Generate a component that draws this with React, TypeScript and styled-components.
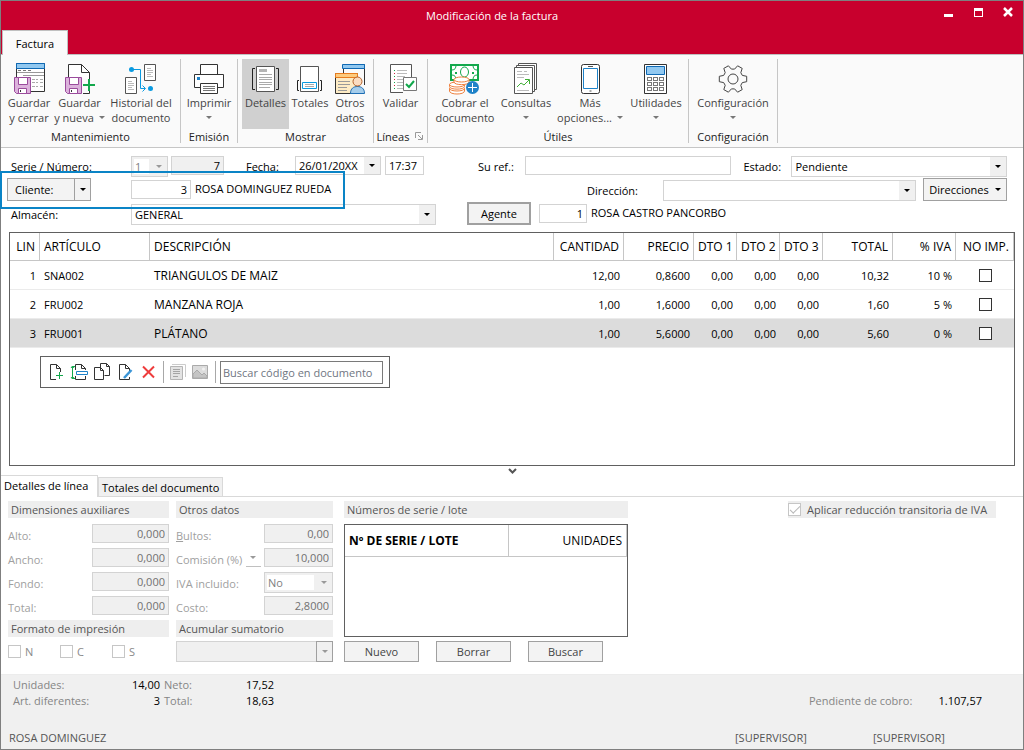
import React from "react";
import styled, { createGlobalStyle } from "styled-components";

const Global = createGlobalStyle`
  * { box-sizing: border-box; }
  body { margin: 0; background: #fff; }
  body, button, input, select { font-family: "Open Sans", "Noto Sans", sans-serif; font-size: 11px; }
  button, input, select { margin: 0; padding: 0; color: inherit; border-radius: 0; }
`;

/* ---------- window ---------- */
const Window = styled.div`
  position: relative;
  display: flex;
  flex-direction: column;
  min-height: 100vh;
  border: 1px solid #7f7f7f;
  line-height: 15px;
  color: #000;
  background: #fff;
`;
const TitleBar = styled.header`
  display: grid;
  grid-template-columns: 100px 1fr 100px;
  height: 54px;
  background: #c8002d;
  color: #fff;
  border-bottom: 1px solid #c0c0c0;
`;
const Title = styled.h1`
  margin: 0;
  padding: 7px 40px 0 0;
  text-align: center;
  font-size: 11px;
  font-weight: 400;
  line-height: 15px;
`;
const FileTab = styled.button`
  align-self: end;
  justify-self: start;
  margin: 0 0 -1px 1px;
  width: 66px;
  height: 25px;
  border: 1px solid #c0c0c0;
  border-bottom: 0;
  background: #fafafa;
  color: #000;
`;
const WindowButtons = styled.div`
  display: flex;
  justify-content: flex-end;
  gap: 14px;
  padding: 4px 7px 0 0;
`;
const WindowButton = styled.button`
  width: 16px;
  height: 16px;
  border: 0;
  background: none;
  svg { display: block; }
`;

/* ---------- ribbon ---------- */
const Ribbon = styled.nav`
  display: flex;
  height: 93px;
  padding: 4px 0;
  background: #fafafa;
  border-bottom: 1px solid #c6c6c6;
`;
const Group = styled.section<{ $pad?: number }>`
  display: flex;
  flex-direction: column;
  padding: 0 ${(p) => p.$pad ?? 0}px;
  border-right: 1px solid #c6c6c6;
`;
const GroupButtons = styled.div`
  display: flex;
  height: 73px;
`;
const GroupLabel = styled.div`
  display: flex;
  justify-content: center;
  align-items: center;
  gap: 6px;
  height: 15px;
  color: #222;
`;
const BigButton = styled.button<{ $w: number; $on?: boolean }>`
  display: flex;
  flex-direction: column;
  align-items: center;
  width: ${(p) => p.$w}px;
  height: 70px;
  padding-top: 3px;
  border: 0;
  background: ${(p) => (p.$on ? "#d0d0d0" : "none")};
  color: #444;
  line-height: 15px;
  white-space: nowrap;
  svg { flex: none; }
`;
const BigIcon = styled.svg`
  width: 32px;
  height: 33px;
  fill: none;
`;
const SecondLine = styled.span`
  display: flex;
  align-items: center;
  gap: 5px;
  min-height: 15px;
`;
const Caret = styled.i<{ $c?: string }>`
  width: 0;
  height: 0;
  flex: none;
  border: 3px solid transparent;
  border-top-color: ${(p) => p.$c ?? "#000"};
  border-bottom: 0;
`;
const Launcher = styled.button`
  width: 9px;
  height: 9px;
  border: 0;
  background: none;
  svg { display: block; }
`;

/* ---------- fields ---------- */
const Input = styled.input<{ $w?: number; $right?: boolean }>`
  width: ${(p) => (p.$w ? p.$w + "px" : "100%")};
  height: 19px;
  flex: none;
  padding: 0 3px 1px;
  border: 1px solid #d3d3d3;
  background: #fff;
  text-align: ${(p) => (p.$right ? "right" : "left")};
  &:disabled { background: #f0f0f0; }
`;
const Combo = styled.span<{ $w?: number; $short?: boolean; $off?: boolean; $edge?: boolean }>`
  display: flex;
  ${(p) => (p.$w ? `width: ${p.$w}px; flex: none;` : "flex: 1; min-width: 0;")}
  height: ${(p) => (p.$short ? 19 : 21)}px;
  margin-bottom: ${(p) => (p.$short ? 2 : 0)}px;
  border: 1px solid #d3d3d3;
  background: #f0f0f0;
  select, input {
    flex: 1;
    min-width: 0;
    appearance: none;
    border: 0;
    padding: 0 3px;
    opacity: 1;
    margin: ${(p) => (p.$off ? "2px" : "0")};
    padding-left: ${(p) => (p.$off ? "1px" : "3px")};
    background: ${(p) => (p.$edge ? "transparent" : "#fff")};
    color: ${(p) => (p.$off ? "#808080" : "inherit")};
  }
`;
const ComboArrow = styled.span<{ $edge?: boolean; $w?: number }>`
  display: flex;
  align-items: center;
  justify-content: center;
  width: ${(p) => p.$w ?? 16}px;
  margin: ${(p) => (p.$edge ? "-1px" : "0")};
  border: ${(p) => (p.$edge ? "1px solid #a0a0a0" : "0")};
`;
const PushButton = styled.button<{ $w: number; $h?: number; $strong?: boolean; $dim?: boolean }>`
  display: flex;
  align-items: center;
  justify-content: center;
  gap: 6px;
  flex: none;
  width: ${(p) => p.$w}px;
  height: ${(p) => p.$h ?? 23}px;
  border: ${(p) => (p.$strong ? 2 : 1)}px solid #a0a0a0;
  background: #f3f3f3;
  color: ${(p) => (p.$dim ? "#444" : "#000")};
`;

/* ---------- document header ---------- */
const DocForm = styled.form`
  position: relative;
  display: flex;
  flex-direction: column;
  gap: 1px;
  padding: 6px 16px 0 6px;
`;
const FormRow = styled.div`
  display: flex;
  align-items: flex-end;
  height: 23px;
  > ${Input} { margin-bottom: 2px; }
`;
const FormLabel = styled.label<{ $w: number; $pad?: number }>`
  flex: none;
  width: ${(p) => p.$w}px;
  padding: 0 0 3px ${(p) => p.$pad ?? 0}px;
  white-space: nowrap;
`;
const FieldText = styled.output<{ $w?: number }>`
  flex: none;
  width: ${(p) => (p.$w ? p.$w + "px" : "auto")};
  padding: 0 0 5px 4px;
  white-space: nowrap;
`;
const Space = styled.span<{ $w: number }>`
  flex: none;
  width: ${(p) => p.$w}px;
`;
const Grow = styled.span<{ $f: number }>`
  display: flex;
  flex: ${(p) => p.$f} 1 0;
  min-width: 0;
  align-items: flex-start;
  height: 21px;
`;
const SplitButton = styled.div`
  display: flex;
  flex: none;
  width: 84px;
  height: 23px;
  margin-right: 40px;
  button {
    display: flex;
    align-items: center;
    justify-content: center;
    border: 1px solid #a0a0a0;
    background: #f3f3f3;
  }
  button:first-child { flex: 1; justify-content: flex-start; padding-left: 7px; border-right: 0; }
  button:last-child { width: 17px; }
`;
const Highlight = styled.div`
  position: absolute;
  left: -1px;
  top: 23px;
  width: 345px;
  height: 38px;
  border: 2px solid #0a84c6;
  pointer-events: none;
`;

/* ---------- lines table ---------- */
const LinesPanel = styled.section`
  flex: 1;
  min-height: 234px;
  margin: 7px 8px 0;
  border: 1px solid #606060;
`;
const LinesTable = styled.table`
  width: 100%;
  table-layout: fixed;
  border-collapse: separate;
  border-spacing: 0;
  font-size: 12px;
`;
const Th = styled.th<{ $l?: boolean }>`
  height: 28px;
  padding: 0 4px;
  border-right: 1px solid #c6c6c6;
  border-bottom: 1px solid #c6c6c6;
  font-weight: 400;
  text-align: ${(p) => (p.$l ? "left" : "right")};
  white-space: nowrap;
`;
const LineRow = styled.tr<{ $sel?: boolean }>`
  background: ${(p) => (p.$sel ? "#dcdcdc" : "#fff")};
`;
const Td = styled.td<{ $l?: boolean; $c?: boolean; $big?: boolean }>`
  height: 29px;
  padding: 0 4px;
  border-bottom: 1px solid #ebebeb;
  font-size: ${(p) => (p.$big ? 12 : 11)}px;
  text-align: ${(p) => (p.$l ? "left" : p.$c ? "center" : "right")};
  white-space: nowrap;
`;
const Check = styled.input<{ $c?: string }>`
  position: relative;
  appearance: none;
  display: block;
  flex: none;
  width: 13px;
  height: 13px;
  border: 1px solid ${(p) => p.$c ?? "#333"};
  background: #fff;
  &:checked::after {
    content: "";
    position: absolute;
    left: 1px;
    top: 2px;
    width: 9px;
    height: 4px;
    border: solid #b8b8b8;
    border-width: 0 0 1px 1px;
    transform: rotate(-45deg);
  }
`;
const CheckCell = styled.span`
  display: flex;
  justify-content: center;
`;
const LineTools = styled.div`
  display: flex;
  align-items: center;
  gap: 4px;
  width: 350px;
  height: 32px;
  margin: 8px 0 0 30px;
  padding: 0 6px;
  border: 1px solid #606060;
`;
const ToolButton = styled.button`
  width: 19px;
  height: 20px;
  border: 0;
  background: none;
  svg { display: block; fill: none; }
`;
const ToolSep = styled.span`
  width: 1px;
  height: 22px;
  margin-left: 1px;
  background: #a8a8a8;
`;
const Search = styled.input`
  flex: 1;
  min-width: 0;
  height: 23px;
  padding: 0 2px;
  border: 1px solid #7a7a7a;
  &::placeholder { color: #6f7682; opacity: 1; }
`;
const Splitter = styled.div`
  display: flex;
  justify-content: center;
  align-items: center;
  height: 9px;
`;

/* ---------- details ---------- */
const Tabs = styled.div`
  display: flex;
  align-items: flex-end;
  height: 22px;
  border-bottom: 1px solid #d9d9d9;
`;
const Tab = styled.button<{ $on?: boolean; $w: number }>`
  width: ${(p) => p.$w}px;
  height: ${(p) => (p.$on ? 22 : 19)}px;
  margin-bottom: ${(p) => (p.$on ? -1 : 0)}px;
  padding: 0 0 ${(p) => (p.$on ? 2 : 0)}px 3px;
  border: 1px solid #d9d9d9;
  border-bottom: 0;
  border-left-width: ${(p) => (p.$on ? 0 : 1)}px;
  background: ${(p) => (p.$on ? "#fff" : "#f0f0f0")};
  text-align: left;
  white-space: nowrap;
`;
const Details = styled.section`
  display: grid;
  grid-template-columns: 161px 157px 288px 1fr;
  column-gap: 7px;
  height: 177px;
  padding: 4px 27px 0 7px;
  color: #555;
`;
const Column = styled.div<{ $indent?: boolean }>`
  display: flex;
  flex-direction: column;
  gap: 4px;
  margin-left: ${(p) => (p.$indent ? 4 : 0)}px;
`;
const Heading = styled.h2`
  margin: 0;
  height: 17px;
  padding: 0 3px;
  background: #eee;
  font-size: 11px;
  font-weight: 400;
  line-height: 17px;
`;
const DimList = styled.div`
  display: grid;
  grid-auto-rows: 20px;
  row-gap: 4px;
  padding-top: 2px;
`;
const DimRow = styled.div`
  display: flex;
  align-items: flex-start;
  justify-content: space-between;
  color: #707070;
  label { padding-top: 4px; color: #a0a0a0; white-space: nowrap; }
`;
const MiniDrop = styled.button`
  display: flex;
  align-items: center;
  justify-content: center;
  width: 15px;
  height: 19px;
  border: 0;
  border-bottom: 1px solid #c0c0c0;
  background: none;
`;
const Checks = styled.div`
  display: flex;
  height: 21px;
  align-items: center;
  label { display: flex; align-items: center; gap: 4px; width: 52px; color: #8a8a8a; }
`;
const Lots = styled.div`
  height: 113px;
  margin-top: 2px;
  border: 1px solid #606060;
  color: #000;
`;
const LotTable = styled(LinesTable)`
  ${Th} { height: 32px; }
`;
const ButtonRow = styled.div`
  display: flex;
  gap: 17px;
`;
const Reduction = styled.label`
  justify-self: end;
  display: flex;
  align-items: center;
  gap: 6px;
  width: 208px;
  height: 17px;
  background: #eee;
`;

/* ---------- footer ---------- */
const Footer = styled.footer`
  height: 75px;
  padding: 2px 12px 0 8px;
  background: #f0f0f0;
  border-top: 1px solid #ececec;
`;
const Totals = styled.dl`
  display: grid;
  grid-template-columns: 81px 70px 48px 66px 1fr 177px;
  grid-auto-rows: 16px;
  margin: 0;
  padding-right: 29px;
  line-height: 16px;
  dt { padding-left: 4px; color: #858585; white-space: nowrap; }
  dd { margin: 0; text-align: right; }
`;
const Pending = styled.div`
  grid-column: 6;
  display: flex;
  justify-content: space-between;
`;
const Status = styled.div`
  display: grid;
  grid-template-columns: 1fr 138px 138px;
  margin-top: 21px;
  line-height: 16px;
  color: #555;
`;

/* ---------- icons ---------- */
const Floppy = ({ x, y }: { x: number; y: number }) => (
  <g transform={`translate(${x} ${y})`}>
    <path d="M.5.5h16v16h-14l-2-2z" fill="#dcb2dc" stroke="#9a4b9c" />
    <path d="M4.500.5h9v7h-9z" fill="#fff" stroke="#9a4b9c" />
    <path d="M4.500 11.500h8v5h-8z" fill="#fff" stroke="#9a4b9c" />
    <path d="M6.500 13v2" stroke="#333" />
  </g>
);

/* Outline of a six-toothed wheel: each tooth is wider at its root than at its tip. */
const gearOutline = (cx: number, cy: number, root: number, tip: number) =>
  Array.from({ length: 6 }, (_, i) =>
    [[-21, root], [-11, tip], [11, tip], [21, root]].map(([a, r]) => {
      const t = ((i * 60 + a) * Math.PI) / 180;
      return `${(cx + r * Math.cos(t)).toFixed(1)},${(cy + r * Math.sin(t)).toFixed(1)}`;
    }).join(" ")
  ).join(" ");

const icons = {
  saveClose: (
    <>
      <path d="M3.500 1.500h28v28h-28z" fill="#fff" stroke="#333" />
      <path d="M3.500 1.500h28v5h-28z" fill="#91c8f0" stroke="#0f69b4" />
      <path d="M4 10.500h27M10 13.500h21" stroke="#999" />
      <path d="M5 8.500h3M10 8.500h3M15 8.500h3" stroke="#777" />
      <path d="M19 17.500h3M23 17.500h2M27 17.500h3M19 20.500h3M23 20.500h2M27 20.500h3M19 24.500h3M23 24.500h2M27 24.500h3" stroke="#aaa" />
      <Floppy x={1} y={15} />
    </>
  ),
  saveNew: (
    <>
      <path d="M4.500 15V2.500h13l8 8V17M25.500 29v2.500H19" stroke="#333" fill="#fff" />
      <path d="M17.500 2.500v8h8" stroke="#333" />
      <Floppy x={1} y={15} />
      <path d="M19 23h12M25 17v12" stroke="#12a84c" strokeWidth="2" />
    </>
  ),
  history: (
    <>
      <path d="M19.500 2.500h11v16h-11zM.5 15.500h11v16H.5z" fill="#fff" stroke="#555" />
      <path d="M22 6.500h4M22 8.500h6M22 10.500h6M22 12.500h4M22 14.500h6M3 19.500h4M3 21.500h6M3 23.500h6M3 25.500h4M3 27.500h6" stroke="#bbb" />
      <path d="M6 7.500h9.500v19H20M17.500 23.500l3 3-3 3" stroke="#0a9ae0" />
      <circle cx="6.500" cy="7.500" r="2.500" fill="#0a9ae0" />
      <circle cx="25.500" cy="26.500" r="2.500" fill="#0a9ae0" />
    </>
  ),
  print: (
    <>
      <path d="M7.500 2.500h17v10h-17zM1.500 12.500h29v13h-29z" fill="#fff" stroke="#333" />
      <path d="M7.500 21.500h17v10h-17z" fill="#fff" stroke="#333" />
      <path d="M10 24.500h12M10 26.500h12M10 28.500h12" stroke="#777" />
      <path d="M4 15h3v3H4z" fill="#1e82c8" />
    </>
  ),
  details: (
    <>
      <path d="M6.500 4.500h18v25h-18z" fill="#fff" stroke="#555" />
      <path d="M9 7h8v3H9z" fill="#b5b5b5" />
      <path d="M9 12.500h13M9 15.500h13M9 17.500h13M9 20.500h13M9 22.500h13M9 25.500h11" stroke="#aaa" />
      <path d="M5 6.500H2.500v21H5M26 6.500h2.500v21H26" stroke="#222" />
    </>
  ),
  totals: (
    <>
      <path d="M6.500 4.500h18v25h-18z" fill="#fff" stroke="#555" />
      <path d="M8.500 20.500h14v6h-14z" stroke="#0a9ae0" />
      <path d="M11 22.500h9M11 24.500h9" stroke="#aaa" />
      <path d="M5 18.500H3.500v10H5M26 18.500h1.500v10H26" stroke="#222" />
    </>
  ),
  other: (
    <>
      <path d="M9.500 12V2.500h21V23" stroke="#333" />
      <path d="M8.500 2.500h22v4h-22z" fill="#91c8f0" stroke="#0f69b4" />
      <path d="M1.500 11.500h22v20h-22z" fill="#fdebc4" stroke="#333" />
      <path d="M1.500 11.500h22v4h-22z" fill="#fdcb7e" stroke="#e87d1e" />
      <path d="M4 19.500h12M4 22.500h12M4 25.500h9M4 28.500h9" stroke="#999" />
      <path d="M16.500 31.500c0-5 3-7 7-7s7 2 7 7z" fill="#a5cdeb" stroke="#1e6eb4" />
      <circle cx="23.500" cy="19.500" r="4.500" fill="#fbdcc0" stroke="#b5622b" />
    </>
  ),
  validate: (
    <>
      <path d="M18 30.500H5.500v-28h21V16" fill="#fff" stroke="#555" />
      <path d="M12 8.500h10M12 11.500h10M12 14.500h8M12 17.500h6M12 20.500h6M12 23.500h6M12 26.500h6" stroke="#bbb" />
      <path d="M9 8.500h1M9 14.500h1M9 20.500h1M9 26.500h1" stroke="#12a84c" />
      <path d="M9 11.500h1M9 17.500h1M9 23.500h1" stroke="#d0213b" />
      <path d="M18.500 15.500h13v13h-13z" fill="#fff" stroke="#777" />
      <path d="M21 22l3 3 5-6" stroke="#12a84c" strokeWidth="2" />
    </>
  ),
  cash: (
    <>
      <path d="M2 3h27v15H2z" fill="#fff" stroke="#12a84c" strokeWidth="2" />
      <path d="M3 8c3 0 4-2 4-5M28 8c-3 0-4-2-4-5M28 13c-3 0-4 2-4 5" stroke="#12a84c" />
      <path d="M3 13c3 0 4 2 4 5" stroke="#12a84c" />
      <path d="M6 11h2M23 11h2" stroke="#12a84c" strokeWidth="2" />
      <ellipse cx="15.500" cy="10" rx="4" ry="5" stroke="#12a84c" />
      <g fill="#fff" stroke="#ee7f3c">
        <path d="M.5 26.500v2.500c0 4 15 4 15 0v-2.500z" />
        <ellipse cx="8" cy="26.500" rx="7.500" ry="2.500" />
        <path d="M.5 22.500v2c0 3.500 15 3.500 15 0v-2z" />
        <ellipse cx="8" cy="22.500" rx="7.500" ry="2.500" />
        <path d="M5 17.500v2.500c0 3.500 15 3.500 15 0v-2.500z" />
        <ellipse cx="12.500" cy="17.500" rx="7.500" ry="2.500" />
      </g>
      <circle cx="23.500" cy="25.500" r="6.500" fill="#1e82c8" />
      <path d="M19 25.500h9M23.500 21v9" stroke="#fff" />
    </>
  ),
  queries: (
    <>
      <path d="M8.500 4V1.500h18v26H24" fill="#fff" stroke="#555" />
      <path d="M6.500 6V3.500h18v26H22" fill="#fff" stroke="#555" />
      <path d="M4.500 5.500h18v26h-18z" fill="#fff" stroke="#555" />
      <path d="M7 9.500h5M14 9.500h3M7 12.500h12M7 15.500h7M7 28.500h12" stroke="#bbb" />
      <path d="M7 25l4-4 3 2 5-5M15 17.500h4.500V22" stroke="#3fae35" />
    </>
  ),
  phone: (
    <>
      <rect x="7.500" y="2.500" width="18" height="29" rx="2" fill="#fff" stroke="#333" />
      <path d="M9.500 6.500h14v20h-14z" stroke="#1e82c8" />
      <path d="M14 4.500h5M15.500 29h2" stroke="#555" />
    </>
  ),
  calc: (
    <>
      <path d="M4.500 2.500h22v29h-22z" fill="#fff" stroke="#333" />
      <path d="M6.500 4.500h18v8h-18z" fill="#91c8f0" stroke="#0f69b4" />
      {[15.5, 20.5, 25.5].map((y) =>
        [7.5, 13.5, 19.5].map((x) => <rect key={x + "-" + y} x={x} y={y} width="4" height="3" stroke="#777" />)
      )}
    </>
  ),
  gear: (
    <g stroke="#444">
      <circle cx="16" cy="17" r="5" />
      <polygon points={gearOutline(16, 17, 10, 14)} strokeLinejoin="round" />
    </g>
  ),
};
const Page = ({ d = "" }: { d?: string }) => (
  <>
    <path d={"M9 17.500H3.500v-15h6l4 4V10" + d} stroke="#333" />
    <path d="M9.500 2.500v4h4" stroke="#333" />
  </>
);
const tools: [string, React.ReactNode][] = [
  ["Nueva línea", <><Page /><path d="M9 13.500h7M12.500 10v7" stroke="#12a84c" /></>],
  ["Insertar línea", <>
    <path d="M5.500 8V2.500h6l4 4V8M5.500 14v3.500h10V14M11.500 2.500v4h4" stroke="#333" />
    <path d="M6.500 9.500h11v3h-11z" stroke="#1e82c8" />
    <path d="M5 4.500H2.500v12H5M1 6l1.500-2L4 6M1 15l1.500 2L4 15" stroke="#12a84c" />
  </>],
  ["Duplicar línea", <>
    <path d="M7.500 6V1.500h6l3 3v9h-5M13.500 1.500v3h3" stroke="#333" />
    <path d="M1.500 5.500h6l3 3v9h-9zM7.500 5.500v3h3" stroke="#333" />
  </>],
  ["Editar línea", <><Page d="M13.500 15v2.500H9" /><path d="M8 16l7.500-8" stroke="#3c96d7" strokeWidth="2.500" /></>],
  ["Eliminar línea", <path d="M4 4.500l11 11M15 4.500l-11 11" stroke="#ee3c3c" strokeWidth="2" />],
];
const grayTools: [string, React.ReactNode][] = [
  ["Texto", <>
    <path d="M4 2.500h13.500V15" stroke="#ccc" />
    <path d="M2.500 4.500h12v13h-12z" fill="#e3e3e3" stroke="#b5b5b5" />
    <path d="M5 7.500h7M5 9.500h7M5 11.500h7M5 14.500h5" stroke="#a5a5a5" />
  </>],
  ["Imagen", <>
    <path d="M1.500 3.500h15v13h-15z" fill="#dcdcdc" stroke="#aaa" />
    <path d="M2 12l4-4 5 5 2-2 3 3v2H2z" fill="#c4c4c4" stroke="#aaa" />
    <circle cx="12.500" cy="7" r="1.500" fill="#f2f2f2" />
  </>],
];

type IconName = keyof typeof icons;
type Item = { icon: IconName; w: number; a: string; b?: string; caret?: boolean; on?: boolean };
const groups: { label: string; pad?: number; launcher?: boolean; items: Item[] }[] = [
  { label: "Mantenimiento", pad: 3, items: [
    { icon: "saveClose", w: 50, a: "Guardar", b: "y cerrar" },
    { icon: "saveNew", w: 51, a: "Guardar", b: "y nueva", caret: true },
    { icon: "history", w: 72, a: "Historial del", b: "documento" },
  ] },
  { label: "Emisión", items: [{ icon: "print", w: 56, a: "Imprimir", caret: true }] },
  { label: "Mostrar", pad: 4, items: [
    { icon: "details", w: 47, a: "Detalles", on: true },
    { icon: "totals", w: 42, a: "Totales" },
    { icon: "other", w: 38, a: "Otros", b: "datos" },
  ] },
  { label: "Líneas", launcher: true, items: [{ icon: "validate", w: 53, a: "Validar" }] },
  { label: "Útiles", pad: 3, items: [
    { icon: "cash", w: 68, a: "Cobrar el", b: "documento" },
    { icon: "queries", w: 54, a: "Consultas", caret: true },
    { icon: "phone", w: 74, a: "Más", b: "opciones...", caret: true },
    { icon: "calc", w: 58, a: "Utilidades", caret: true },
  ] },
  { label: "Configuración", items: [{ icon: "gear", w: 88, a: "Configuración", caret: true }] },
];

const heads = ["LIN", "ARTÍCULO", "DESCRIPCIÓN", "CANTIDAD", "PRECIO", "DTO 1", "DTO 2", "DTO 3", "TOTAL", "% IVA", "NO IMP."];
const colWidths = [30, 110, 0, 70, 70, 43, 43, 43, 70, 63, 58];
const lines = [
  ["1", "SNA002", "TRIANGULOS DE MAIZ", "12,00", "0,8600", "0,00", "0,00", "0,00", "10,32", "10 %"],
  ["2", "FRU002", "MANZANA ROJA", "1,00", "1,6000", "0,00", "0,00", "0,00", "1,60", "5 %"],
  ["3", "FRU001", "PLÁTANO", "1,00", "5,6000", "0,00", "0,00", "0,00", "5,60", "0 %"],
];
const isText = (i: number) => i === 1 || i === 2;

export default function App() {
  return (
    <Window>
      <Global />
      <TitleBar>
        <FileTab>Factura</FileTab>
        <Title>Modificación de la factura</Title>
        <WindowButtons>
          <WindowButton aria-label="Minimizar"><svg width="16" height="16"><path d="M4 9h9v3H4z" fill="#fff" /></svg></WindowButton>
          <WindowButton aria-label="Maximizar"><svg width="16" height="16"><path d="M4 3h9v9H4zM5 6v5h7V6z" fill="#fff" fillRule="evenodd" /></svg></WindowButton>
          <WindowButton aria-label="Cerrar"><svg width="16" height="16"><path d="M4 3l8 8M12 3l-8 8" stroke="#fff" strokeWidth="2.500" /></svg></WindowButton>
        </WindowButtons>
      </TitleBar>

      <Ribbon>
        {groups.map((g) => (
          <Group key={g.label} $pad={g.pad}>
            <GroupButtons>
              {g.items.map((it) => (
                <BigButton key={it.icon} $w={it.w} $on={it.on}>
                  <BigIcon viewBox="0 0 32 33">{icons[it.icon]}</BigIcon>
                  <span>{it.a}</span>
                  <SecondLine>
                    {it.b}
                    {it.caret && <Caret $c="#777" />}
                  </SecondLine>
                </BigButton>
              ))}
            </GroupButtons>
            <GroupLabel>
              {g.label}
              {g.launcher && (
                <Launcher aria-label="Opciones de líneas">
                  <svg width="9" height="9" fill="none" stroke="#999"><path d="M.5 6V.5H6M3 3l4 4M7.500 3v4.500H3" /></svg>
                </Launcher>
              )}
            </GroupLabel>
          </Group>
        ))}
      </Ribbon>

      <DocForm>
        <FormRow>
          <FormLabel $w={124} $pad={4} htmlFor="serie">Serie / Número:</FormLabel>
          <Combo $w={37} $off>
            <select id="serie" disabled><option>1</option></select>
            <ComboArrow><Caret $c="#999" /></ComboArrow>
          </Combo>
          <Space $w={3} />
          <Input $w={53} $right disabled defaultValue="7" aria-label="Número" />
          <FormLabel $w={71} $pad={22} htmlFor="fecha">Fecha:</FormLabel>
          <Combo $w={86} $short>
            <input id="fecha" defaultValue="26/01/20XX" />
            <ComboArrow><Caret /></ComboArrow>
          </Combo>
          <Space $w={4} />
          <Input $w={39} defaultValue="17:37" aria-label="Hora" />
          <FormLabel $w={101} $pad={54} htmlFor="ref">Su ref.:</FormLabel>
          <Grow $f={206}><Input id="ref" /></Grow>
          <FormLabel $w={60} $pad={12} htmlFor="estado">Estado:</FormLabel>
          <Grow $f={215}>
            <Combo>
              <select id="estado"><option>Pendiente</option></select>
              <ComboArrow><Caret /></ComboArrow>
            </Combo>
          </Grow>
        </FormRow>
        <FormRow>
          <SplitButton>
            <button type="button">Cliente:</button>
            <button type="button" aria-label="Más opciones de cliente"><Caret /></button>
          </SplitButton>
          <Input $w={60} $right defaultValue="3" aria-label="Código de cliente" />
          <FieldText $w={396}>ROSA DOMINGUEZ RUEDA</FieldText>
          <FormLabel $w={76} htmlFor="direccion">Dirección:</FormLabel>
          <Combo>
            <select id="direccion"><option></option></select>
            <ComboArrow><Caret /></ComboArrow>
          </Combo>
          <Space $w={7} />
          <PushButton type="button" $w={84}>Direcciones<Caret /></PushButton>
        </FormRow>
        <FormRow>
          <FormLabel $w={124} $pad={4} htmlFor="almacen">Almacén:</FormLabel>
          <Combo $w={305}>
            <select id="almacen"><option>GENERAL</option></select>
            <ComboArrow><Caret /></ComboArrow>
          </Combo>
          <Space $w={31} />
          <PushButton type="button" $w={64} $strong>Agente</PushButton>
          <Space $w={8} />
          <Input $w={48} $right defaultValue="1" aria-label="Código de agente" />
          <FieldText>ROSA CASTRO PANCORBO</FieldText>
        </FormRow>
        <Highlight />
      </DocForm>

      <LinesPanel>
        <LinesTable>
          <colgroup>{colWidths.map((w, i) => <col key={i} width={w || undefined} />)}</colgroup>
          <thead>
            <tr>{heads.map((h, i) => <Th key={h} $l={isText(i)}>{h}</Th>)}</tr>
          </thead>
          <tbody>
            {lines.map((l, r) => (
              <LineRow key={l[1]} $sel={r === 2}>
                {l.map((c, i) => <Td key={i} $l={isText(i)} $big={i === 2}>{c}</Td>)}
                <Td $c><CheckCell><Check type="checkbox" aria-label={"No imprimir " + l[2]} /></CheckCell></Td>
              </LineRow>
            ))}
          </tbody>
        </LinesTable>
        <LineTools>
          {tools.map(([name, art]) => (
            <ToolButton key={name} aria-label={name}><svg width="19" height="20">{art}</svg></ToolButton>
          ))}
          <ToolSep />
          {grayTools.map(([name, art]) => (
            <ToolButton key={name} aria-label={name} disabled><svg width="19" height="20">{art}</svg></ToolButton>
          ))}
          <ToolSep />
          <Search placeholder="Buscar código en documento" aria-label="Buscar código en documento" />
        </LineTools>
      </LinesPanel>
      <Splitter>
        <svg width="9" height="6" fill="none" stroke="#555" strokeWidth="2"><path d="M1 1l3.500 3.500L8 1" /></svg>
      </Splitter>

      <Tabs>
        <Tab $on $w={97}>Detalles de línea</Tab>
        <Tab $w={125}>Totales del documento</Tab>
      </Tabs>
      <Details>
        <Column>
          <Heading>Dimensiones auxiliares</Heading>
          <DimList>
            {["Alto", "Ancho", "Fondo", "Total"].map((n) => (
              <DimRow key={n}>
                <label htmlFor={n}>{n}:</label>
                <Input id={n} $w={77} $right disabled defaultValue="0,000" />
              </DimRow>
            ))}
          </DimList>
          <Heading>Formato de impresión</Heading>
          <Checks>
            {["N", "C", "S"].map((n) => <label key={n}><Check type="checkbox" disabled $c="#c6c6c6" />{n}</label>)}
          </Checks>
        </Column>
        <Column>
          <Heading>Otros datos</Heading>
          <DimList>
            <DimRow>
              <label htmlFor="bultos"><u>B</u>ultos:</label>
              <Input id="bultos" $w={69} $right disabled defaultValue="0,00" />
            </DimRow>
            <DimRow>
              <label htmlFor="comision">Comisión (%)</label>
              <MiniDrop aria-label="Tipo de comisión"><Caret $c="#999" /></MiniDrop>
              <Input id="comision" $w={69} $right disabled defaultValue="10,000" />
            </DimRow>
            <DimRow>
              <label htmlFor="iva">IVA incluido:</label>
              <Combo $w={69} $off>
                <select id="iva" disabled><option>No</option></select>
                <ComboArrow><Caret $c="#999" /></ComboArrow>
              </Combo>
            </DimRow>
            <DimRow>
              <label htmlFor="costo">Costo:</label>
              <Input id="costo" $w={69} $right disabled defaultValue="2,8000" />
            </DimRow>
          </DimList>
          <Heading>Acumular sumatorio</Heading>
          <DimRow>
            <Combo $edge>
              <select disabled aria-label="Acumular sumatorio"><option></option></select>
              <ComboArrow $edge $w={17}><Caret $c="#999" /></ComboArrow>
            </Combo>
          </DimRow>
        </Column>
        <Column $indent>
          <Heading>Números de serie / lote</Heading>
          <Lots>
            <LotTable>
              <colgroup><col /><col width="118" /></colgroup>
              <thead><tr><Th $l><b>Nº DE SERIE / LOTE</b></Th><Th>UNIDADES</Th></tr></thead>
            </LotTable>
          </Lots>
          <ButtonRow>
            <PushButton $w={75} $h={21} $dim>Nuevo</PushButton>
            <PushButton $w={75} $h={21} $dim>Borrar</PushButton>
            <PushButton $w={75} $h={21} $dim>Buscar</PushButton>
          </ButtonRow>
        </Column>
        <Reduction>
          <Check type="checkbox" disabled defaultChecked $c="#c6c6c6" />
          Aplicar reducción transitoria de IVA
        </Reduction>
      </Details>

      <Footer>
        <Totals>
          <dt>Unidades:</dt><dd>14,00</dd>
          <dt>Neto:</dt><dd>17,52</dd>
          <dd /><dd />
          <dt>Art. diferentes:</dt><dd>3</dd>
          <dt>Total:</dt><dd>18,63</dd>
          <Pending><dt>Pendiente de cobro:</dt><dd>1.107,57</dd></Pending>
        </Totals>
        <Status>
          <span>ROSA DOMINGUEZ</span>
          <span>[SUPERVISOR]</span>
          <span>[SUPERVISOR]</span>
        </Status>
      </Footer>
    </Window>
  );
}
